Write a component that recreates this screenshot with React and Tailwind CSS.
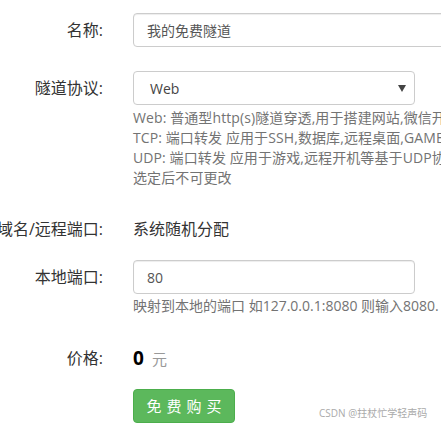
import React from 'react';

const font = { fontFamily: '"Open Sans", "Noto Sans CJK SC", sans-serif' };

// label column: right-aligned, overflows to the left when too long
const Label = ({ children }) => (
  <div className="flex w-[103px] shrink-0 justify-end whitespace-nowrap h-[34px] items-center text-[16px] text-[#333]">
    {children}
  </div>
);

const App = () => {
  return (
    <div
      className="relative w-[441px] h-[427px] overflow-hidden bg-white font-['Open_Sans','Noto_Sans_CJK_SC',sans-serif]"
    >
      {/* 名称 */}
      <div className="flex mt-[13px]">
        <Label>名称:</Label>
        <div className="ml-[30px] shrink-0">
          <div className="w-[340px] h-[34px] border border-[#ccc] rounded-[4px] pl-[13px] flex items-center text-[14px] text-[#555] shadow-[inset_0_1px_1px_rgba(0,0,0,0.075)]">
            我的免费隧道
          </div>
        </div>
      </div>

      {/* 隧道协议 */}
      <div className="flex mt-[24px]">
        <Label>隧道协议:</Label>
        <div className="ml-[30px] shrink-0">
          <div className="relative w-[282px] h-[34px] border border-[#ccc] rounded-[4px] pl-[16px] flex items-center text-[14px] text-[#444]">
            Web
            <span className="absolute right-[8px] top-[13px] w-0 h-0 border-l-[4px] border-r-[4px] border-t-[7px] border-l-transparent border-r-transparent border-t-[#444]" />
          </div>
          <div className="mt-[3px] text-[14px] leading-[20px] text-[#737373] whitespace-nowrap tracking-[0.1px]">
            <div>Web: 普通型http(s)隧道穿透,用于搭建网站,微信开发等</div>
            <div>TCP: 端口转发 应用于SSH,数据库,远程桌面,GAME等</div>
            <div>UDP: 端口转发 应用于游戏,远程开机等基于UDP协议的应用</div>
            <div>选定后不可更改</div>
          </div>
        </div>
      </div>

      {/* 域名/远程端口 */}
      <div className="flex mt-[24px]">
        <Label>域名/远程端口:</Label>
        <div className="ml-[30px] h-[34px] flex items-center text-[16px] text-[#333]">系统随机分配</div>
      </div>

      {/* 本地端口 */}
      <div className="flex mt-[14px]">
        <Label>本地端口:</Label>
        <div className="ml-[30px] shrink-0">
          <div className="w-[282px] h-[34px] border border-[#ccc] rounded-[4px] pl-[13px] flex items-center text-[14px] text-[#555] shadow-[inset_0_1px_1px_rgba(0,0,0,0.075)]">
            80
          </div>
          <div className="mt-[2px] text-[14px] leading-[20px] text-[#737373] whitespace-nowrap">
            映射到本地的端口 如127.0.0.1:8080 则输入8080.
          </div>
        </div>
      </div>

      {/* 价格 */}
      <div className="flex mt-[25px]">
        <Label>价格:</Label>
        <div className="ml-[30px] h-[34px] flex items-center">
          <span className="text-[19px] font-bold text-black leading-none">0</span>
          <span className="ml-[8px] text-[15px] text-[#999] leading-none mt-[3px]">元</span>
        </div>
      </div>

      {/* 购买 */}
      <div className="flex mt-[14px]">
        <div className="w-[103px] shrink-0" />
        <button className="ml-[30px] w-[102px] h-[34px] rounded-[4px] bg-[#5cb85c] border border-[#4cae4c] text-white text-[15px] tracking-[5px] pl-[5px]">
          免费购买
        </button>
      </div>

      <div className="absolute left-[319px] top-[406px] text-[10px] text-[#aaa] whitespace-nowrap" style={font}>
        CSDN @拄杖忙学轻声码
      </div>
    </div>
  );
};

export default App;
